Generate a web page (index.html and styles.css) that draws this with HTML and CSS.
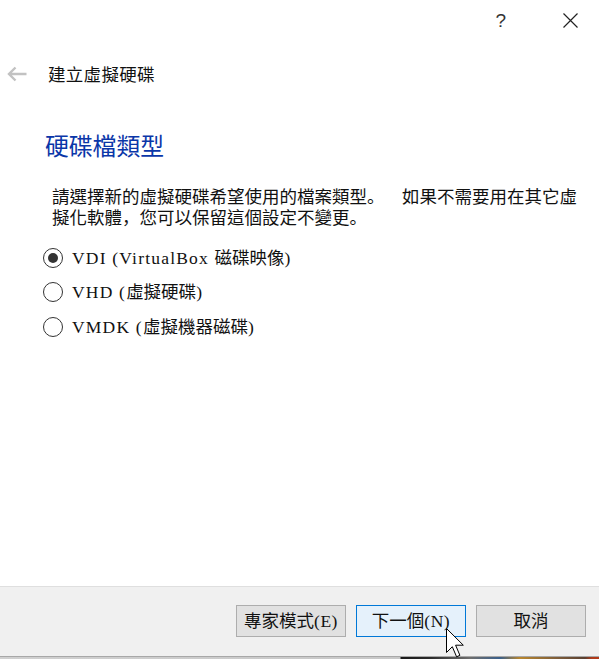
FILE: index.html
```html
<!DOCTYPE html>
<html lang="zh-Hant">
<head>
<meta charset="utf-8">
<title>建立虛擬硬碟</title>
<link rel="stylesheet" href="styles.css">
</head>
<body>
<div class="titlebar">
  <span class="help">?</span>
  <svg class="close" width="15" height="15" viewBox="0 0 15 15"><path d="M0.5 0.5 L14.5 14.5 M14.5 0.5 L0.5 14.5" stroke="#222" stroke-width="1.2" fill="none"/></svg>
</div>
<div class="content">
  <div class="header">
    <svg class="back" width="20" height="16" viewBox="0 0 20 16"><path d="M19.5 8 H2 M8.5 1.5 L2 8 L8.5 14.5" stroke="#c2c2c2" stroke-width="2.4" fill="none"/></svg>
    <span class="wtitle">建立虛擬硬碟</span>
  </div>
  <h1 class="heading">硬碟檔類型</h1>
  <div class="desc">
    <div class="line">請選擇新的虛擬硬碟希望使用的檔案類型<span class="punct" lang="ja">。</span><span class="gap"></span>如果不需要用在其它虛</div>
    <div class="line">擬化軟體<span class="punct" lang="ja">，</span>您可以保留這個設定不變更<span class="punct" lang="ja">。</span></div>
  </div>
  <div class="radios">
    <div class="radio-row"><span class="radio checked"></span><span class="label"><span class="lat">VDI (VirtualBox </span>磁碟映像<span class="lat">)</span></span></div>
    <div class="radio-row"><span class="radio"></span><span class="label"><span class="lat">VHD (</span>虛擬硬碟<span class="lat">)</span></span></div>
    <div class="radio-row"><span class="radio"></span><span class="label"><span class="lat">VMDK (</span>虛擬機器磁碟<span class="lat">)</span></span></div>
  </div>
</div>
<div class="footer">
  <button class="btn">專家模式<span class="lat2">(E)</span></button>
  <button class="btn primary">下一個<span class="lat2">(N)</span></button>
  <button class="btn">取消</button>
</div>
<div class="strip"></div>
<svg class="cursor" width="19" height="30" viewBox="0 0 19 30"><path d="M0.5 0.5 L0.5 24.5 L6.3 18.7 L10.6 28.8 L13.9 27.3 L9.6 17.2 L17.3 17.2 Z" fill="#fff" stroke="#000" stroke-width="1" stroke-linejoin="miter"/></svg>
</body>
</html>
```
FILE: styles.css
```css
html, body {
  margin: 0;
  padding: 0;
}
body {
  width: 599px;
  height: 659px;
  overflow: hidden;
  background: #ffffff;
  display: flex;
  flex-direction: column;
  position: relative;
  font-family: "Liberation Serif", "Noto Sans CJK TC", serif;
  color: #000;
}
.titlebar {
  height: 41px;
  flex: none;
  display: flex;
  justify-content: flex-end;
  align-items: center;
  padding-right: 21px;
}
.help {
  font-family: "Liberation Sans", sans-serif;
  font-size: 19px;
  line-height: 19px;
  color: #333;
  margin-right: 57px;
}
.close {
  display: block;
}
.content {
  flex: 1;
  display: flex;
  flex-direction: column;
}
.header {
  display: flex;
  align-items: center;
  height: 24px;
  margin-top: 20.5px;
}
.back {
  margin-left: 6.5px;
  display: block;
}
.wtitle {
  margin-left: 21.5px;
  font-family: "Noto Sans CJK TC", sans-serif;
  font-size: 17.5px;
  letter-spacing: 0.3px;
  line-height: 24px;
  color: #111;
}
.heading {
  margin: 47px 0 0 45px;
  font-family: "Noto Sans CJK TC", sans-serif;
  font-weight: normal;
  font-size: 23.8px;
  line-height: 24px;
  color: #0a36a8;
}
.desc {
  margin: 28px 0 0 52px;
  font-family: "Noto Sans CJK TC", sans-serif;
  font-size: 17.5px;
  color: #111;
  display: flex;
  flex-direction: column;
  text-spacing-trim: space-all;
}
.line {
  height: 21.5px;
  line-height: 21.5px;
  white-space: nowrap;
}
.punct {
  font-family: "Noto Sans CJK JP", sans-serif;
  text-spacing-trim: space-all;
}
.gap {
  display: inline-block;
  width: 17.5px;
}
.radios {
  margin-top: 13px;
  display: flex;
  flex-direction: column;
}
.radio-row {
  height: 34.5px;
  display: flex;
  align-items: center;
}
.radio {
  margin-left: 43px;
  width: 18px;
  height: 18px;
  border: 1px solid #333;
  border-radius: 50%;
  display: flex;
  align-items: center;
  justify-content: center;
  flex: none;
}
.radio.checked::after {
  content: "";
  width: 10px;
  height: 10px;
  border-radius: 50%;
  background: #333;
}
.label {
  margin-left: 9px;
  font-size: 17.5px;
  line-height: 22px;
  white-space: pre;
  color: #111;
}
.lat {
  letter-spacing: 1.2px;
}
.footer {
  flex: none;
  height: 70px;
  box-sizing: border-box;
  border-top: 1px solid #dfdfdf;
  background: #f0f0f0;
  display: flex;
  justify-content: flex-end;
  align-items: flex-start;
  gap: 10px;
  padding: 18px 13px 0 0;
}
.btn {
  width: 110px;
  height: 32px;
  box-sizing: border-box;
  border: 1px solid #adadad;
  background: #e1e1e1;
  margin: 0;
  padding: 0;
  font-family: "Liberation Serif", "Noto Sans CJK TC", serif;
  font-size: 17.5px;
  line-height: 30px;
  color: #111;
  display: flex;
  align-items: center;
  justify-content: center;
}
.btn.primary {
  border-color: #0078d7;
  background: #e5f1fb;
}
.lat2 {
  letter-spacing: 0.5px;
}
.strip {
  flex: none;
  height: 3px;
  border-top: 1px solid #a8a8a8;
  box-sizing: border-box;
  background: linear-gradient(90deg, #d0d0d0 0, #c8c8c8 400px, #1a1a1a 401px, #2a2a2a 430px, #6e6e6e 470px, #3a5f8a 500px, #b8862e 520px, #7a5a3a 560px, #5a4030 585px, #b03a1a 592px);
}
.cursor {
  position: absolute;
  left: 446px;
  top: 628px;
}
```
